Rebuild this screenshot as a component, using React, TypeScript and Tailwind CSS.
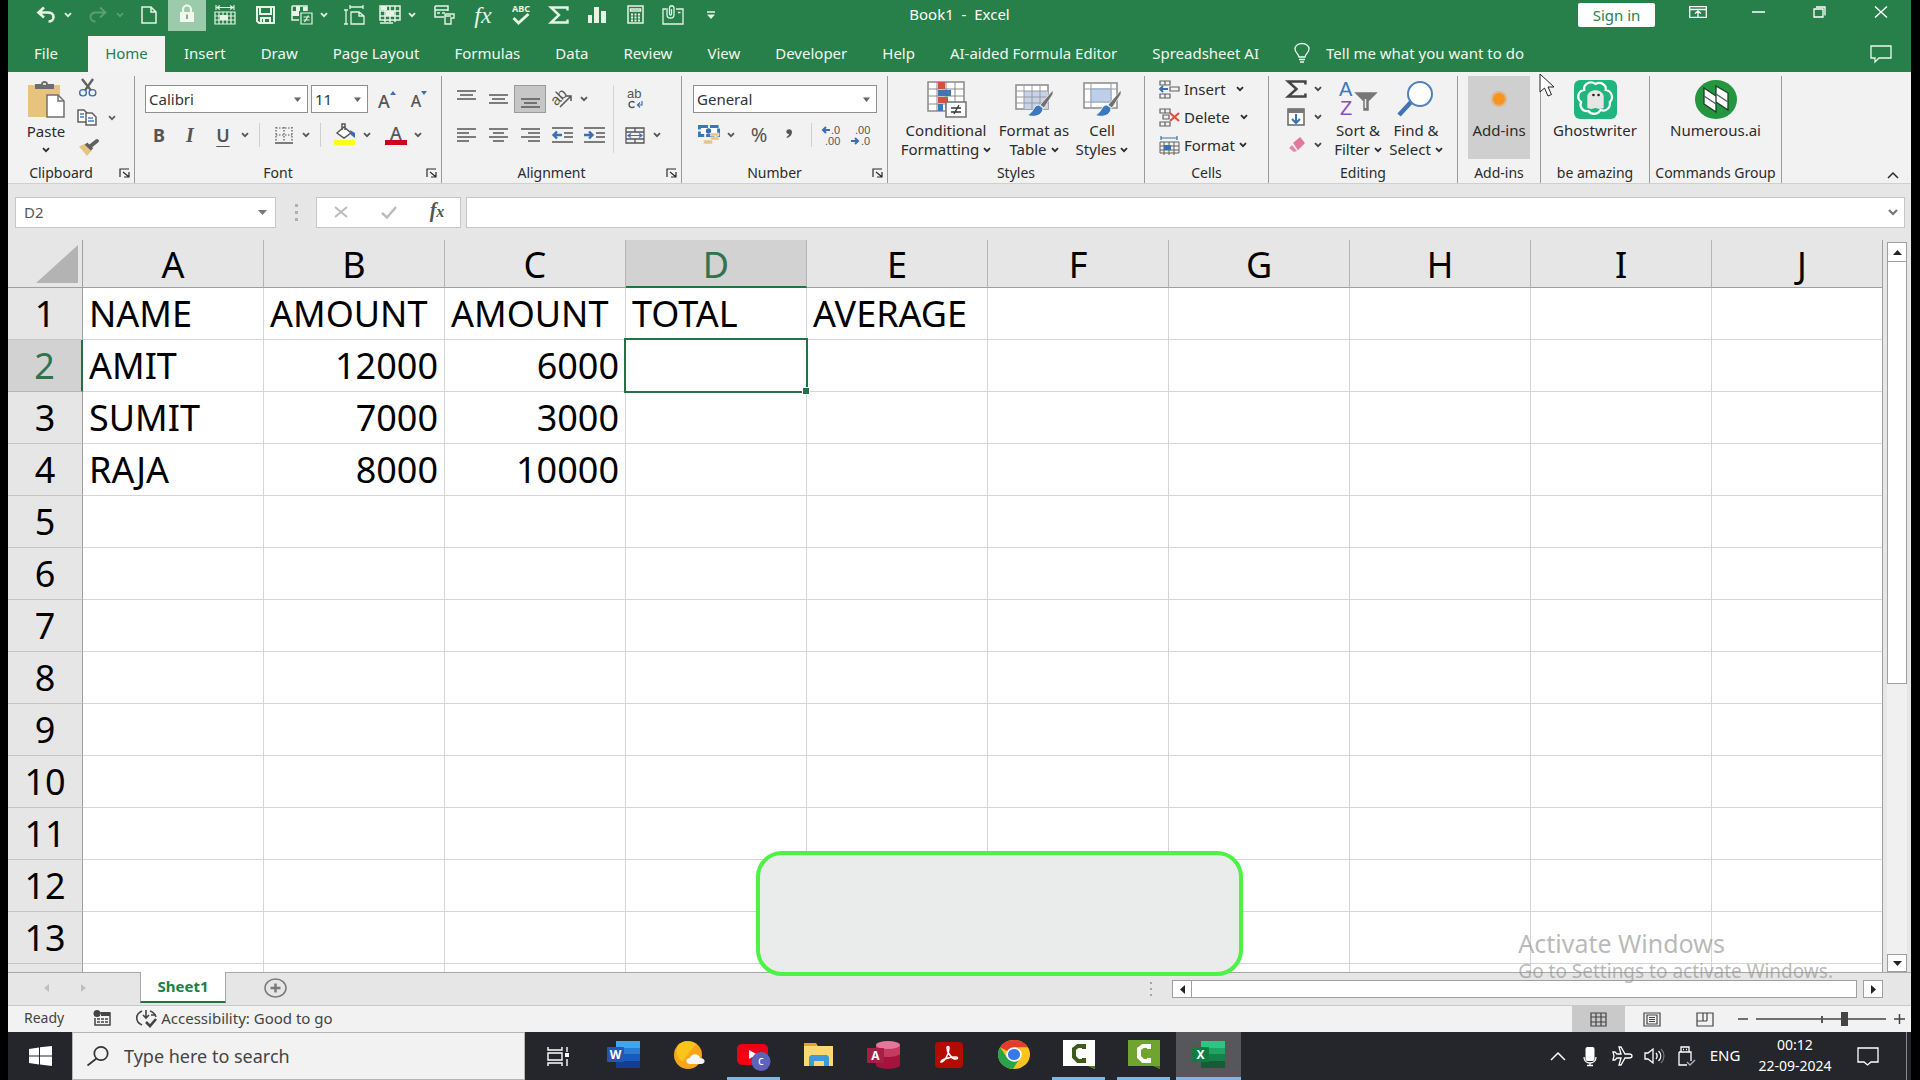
import type { ReactNode } from "react";

type IconProps = {
  w?: number;
  h?: number;
  box?: string;
  className?: string;
  children: ReactNode;
};

const Icon = ({ w = 22, h = 20, box = "0 0 22 20", className = "", children }: IconProps) => (
  <svg
    width={w}
    height={h}
    viewBox={box}
    preserveAspectRatio="none"
    fill="none"
    stroke="currentColor"
    strokeWidth="1.5"
    aria-hidden="true"
    className={`shrink-0 overflow-visible ${className}`}
  >
    {children}
  </svg>
);

const Chevron = ({ className = "" }: { className?: string }) => (
  <Icon w={8} h={6} box="0 0 8 6" className={className}>
    <path d="M1 1.2 4 4.2 7 1.2" strokeWidth="1.8" />
  </Icon>
);

const Triangle = () => (
  <Icon w={7} h={5} box="0 0 7 5">
    <path d="M0 .5h7L3.500 5z" fill="#666" stroke="none" />
  </Icon>
);

type ButtonProps = {
  label: string;
  className?: string;
  children?: ReactNode;
};

const IconButton = ({ label, className = "w-8", children }: ButtonProps) => (
  <button aria-label={label} className={`flex shrink-0 items-center justify-center ${className}`}>
    {children}
  </button>
);

const SplitButton = ({ label, className = "w-[52px]", children }: ButtonProps) => (
  <button aria-label={label} className={`flex shrink-0 items-center ${className}`}>
    <span className="flex w-8 justify-center">{children}</span>
    <Chevron className="ml-[2px]" />
  </button>
);

const Sigma = ({ w = 20, h = 18 }: { w?: number; h?: number }) => (
  <Icon w={w} h={h} box="0 0 20 18">
    <path d="M18.500 4.500V1.500H2L10 9l-8 7.500h16.500v-3" strokeWidth="2.400" />
  </Icon>
);

const QuickAccess = () => (
  <div className="flex h-[31px] flex-1 items-stretch pb-[2px] text-[#e8f3e6]">
    <span className="w-[22px]" />
    <SplitButton label="Undo">
      <Icon w={20} h={17} box="0 0 20 17">
        <path d="M8 1.500 2.500 6.500 8 11.500M3 6.500h8.500c4 0 6 2 6 4.500s-2 4.500-5 4.500" strokeWidth="2.600" />
      </Icon>
    </SplitButton>
    <SplitButton label="Redo" className="w-12 text-[#5a9f6d]">
      <Icon w={20} h={17} box="0 0 20 17">
        <path d="M12 1.500 17.500 6.500 12 11.500M17 6.500H8.500c-4 0-6 2-6 4.500s2 4.500 5 4.500" strokeWidth="2" />
      </Icon>
    </SplitButton>
    <IconButton label="New" className="w-[38px]">
      <Icon w={16} h={18} box="0 0 16 18">
        <path d="M1 1h9l5 5v11H1zM10 1v5h5" />
      </Icon>
    </IconButton>
    <IconButton label="Lock Cell" className="-mb-[2px] w-[38px] bg-[#9bcbaa] pb-1">
      <Icon w={16} h={19} box="0 0 16 19">
        <path d="M4 9V5.500a4 4 0 0 1 8 0V9" stroke="#f3f8ef" strokeWidth="2.200" />
        <path d="M1 8h14v10H1z" fill="#f3f8ef" stroke="none" />
        <path d="M8 10.500v4.500" stroke="#7fb08c" strokeWidth="2" />
      </Icon>
    </IconButton>
    <IconButton label="Form" className="w-[38px]">
      <Icon>
        <path d="M2 0v5M20 0v5M3 2.500h16M6 .5 3 2.500l3 2M16 .5l3 2-3 2" strokeWidth="1.100" />
        <path d="M1 7h20v12H1zM1 11h20M1 15h20M5 7v12M9 7v12M13 7v12M17 7v12" strokeWidth="1.200" />
        <path d="M6 10h8v5H6z" fill="currentColor" stroke="none" />
      </Icon>
    </IconButton>
    <IconButton label="Save" className="w-[42px]">
      <Icon w={19} h={18} box="0 0 19 18">
        <path d="M1 1h17v16H3l-2-2zM4 1v7h11V1M5 17v-5h9v5M8 13v4" strokeWidth="2" />
      </Icon>
    </IconButton>
    <SplitButton label="Conditional Formatting" className="w-[50px]">
      <Icon>
        <path d="M1 1h15v5M1 1v14h7" />
        <path d="M5 1h4v5H5zM5 6h3v5H5zM1 6h4v5H1zM12 2h4v4h-4z" fill="currentColor" stroke="none" />
        <path d="M10 8h11v11H10zM12.500 12h6M12.500 15h6M17.500 10.500l-4 6.500" strokeWidth="1.200" />
      </Icon>
    </SplitButton>
    <IconButton label="Page Size" className="w-[38px]">
      <Icon>
        <path d="M2 5v14M0 5h4M0 19h4M6 2h13M6 0v4M19 0v4M7 7h8l5 4v8H7zM15 7v4h5" strokeWidth="1.300" />
      </Icon>
    </IconButton>
    <SplitButton label="Format Cells">
      <Icon>
        <path d="M1 1h20v14H1zM1 6h20M1 11h20M6 1v16M11 1v16M16 1v16M1 18h13" />
        <path d="M2 1h6v4H2zM7 6h8v5H7z" fill="currentColor" stroke="none" />
      </Icon>
    </SplitButton>
    <IconButton label="Page Setup" className="w-[38px]">
      <Icon>
        <path d="M1 1h13v5M1 1v11h9M1 5h13M3 8h3M8 8h3" />
        <path d="M12 9h8v4h-3v6h-6v-8M12 9c-1.500 0-1.500 2 0 2h5" strokeWidth="1.400" />
      </Icon>
    </IconButton>
    <IconButton label="Insert Function" className="w-[38px] font-['Liberation_Serif',serif] text-2xl italic">
      fx
    </IconButton>
    <IconButton label="Spelling" className="w-[38px] flex-col">
      <span className="text-[9px] leading-[8px] font-bold">ABC</span>
      <Icon w={18} h={12} box="0 0 18 12">
        <path d="m1.500 5 5 5L16.500 1" strokeWidth="2.800" />
      </Icon>
    </IconButton>
    <IconButton label="Sum" className="w-[38px]">
      <Sigma />
    </IconButton>
    <IconButton label="Column Chart" className="w-[38px]">
      <Icon w={20} h={16} box="0 0 20 16">
        <path d="M1 8h4v8H1zM7 0h5v16H7zM14 4h5v12h-5z" fill="currentColor" stroke="none" />
      </Icon>
    </IconButton>
    <IconButton label="Calculator" className="w-[38px]">
      <Icon w={17} h={19} box="0 0 17 19">
        <path d="M1 1h15v17H1zM3.500 4h10v2h-10z" />
        <path d="M4 9.500h9M4 12.500h9M4 15.500h9" strokeDasharray="2 1.500" strokeWidth="2" />
      </Icon>
    </IconButton>
    <IconButton label="Attach" className="w-[38px]">
      <Icon>
        <path d="M4 4H1v15h20V4h-7M5 3v7c0 4 7 4 7 0V3c0-3-4.500-3-4.500 0v6c0 1.500 2 1.500 2 0V4M16 7.500h2.500" strokeWidth="1.300" />
      </Icon>
    </IconButton>
    <IconButton label="Customize Quick Access Toolbar" className="w-[38px]">
      <Icon w={8} h={8} box="0 0 8 8">
        <path d="M0 1h8" />
        <path d="M0 3.500h8L4 8z" fill="currentColor" stroke="none" />
      </Icon>
    </IconButton>
  </div>
);

const TitleBar = () => (
  <div className="flex h-9 items-start justify-between text-white">
    <QuickAccess />
    <h1 className="pt-1 text-[15px] leading-5 whitespace-pre">Book1  -  Excel</h1>
    <div className="flex flex-1 items-start justify-end">
      <button className="mt-[3px] mr-3 h-6 w-[77px] rounded-xs bg-white text-[15px] leading-5 text-[#277f49]">
        Sign in
      </button>
      <IconButton label="Ribbon Display Options" className="h-6 w-[61px]">
        <Icon w={18} h={12} box="0 0 18 12">
          <path d="M.7.7h16.600v10.600H.7zM.7 3.500h16.600M9 11V5M6 7.500l3-2.500 3 2.500" strokeWidth="1.300" />
        </Icon>
      </IconButton>
      <IconButton label="Minimize" className="h-6 w-[61px]">
        <Icon w={13} h={2} box="0 0 13 2">
          <path d="M0 1h13" />
        </Icon>
      </IconButton>
      <IconButton label="Restore" className="h-6 w-[61px]">
        <Icon w={13} h={12} box="0 0 13 12">
          <path d="M1 3h9v8H1zM3 1h9v8.500" strokeWidth="1.300" />
        </Icon>
      </IconButton>
      <IconButton label="Close" className="h-6 w-[61px]">
        <Icon w={14} h={12} box="0 0 14 12">
          <path d="m1 .5 12 11M13 .5 1 11.500" strokeWidth="1.400" />
        </Icon>
      </IconButton>
    </div>
  </div>
);

const tabs = [
  "Insert",
  "Draw",
  "Page Layout",
  "Formulas",
  "Data",
  "Review",
  "View",
  "Developer",
  "Help",
  "AI-aided Formula Editor",
  "Spreadsheet AI",
];

const TabBar = () => (
  <nav className="flex h-9 items-stretch text-[15px] text-[#f1f8ee]">
    <button className="w-20 pr-1 pb-[2px]">File</button>
    <button className="mr-[2px] w-[77px] bg-[#f3f3f3] pb-[2px] text-[#277f49]">Home</button>
    <div className="flex gap-px">
      {tabs.map((tab) => (
        <button key={tab} className="px-[17px] pb-[2px] whitespace-nowrap">
          {tab}
        </button>
      ))}
    </div>
    <label className="ml-[18px] flex items-center gap-4 pb-[2px]">
      <Icon w={16} h={20} box="0 0 16 20">
        <path d="M5 14c0-3-4-4-4-8a7 5.500 0 0 1 14 0c0 4-4 5-4 8zM5 16.500h6M6 19h4" strokeWidth="1.300" />
      </Icon>
      <input
        aria-label="Tell me what you want to do"
        placeholder="Tell me what you want to do"
        className="w-56 bg-transparent outline-none placeholder:text-[#f1f8ee]"
      />
    </label>
    <IconButton label="Comments" className="mr-[19px] ml-auto">
      <Icon w={22} h={18} box="0 0 22 18">
        <path d="M1 1h20v12H9l-4 4v-4H1z" strokeWidth="1.300" />
      </Icon>
    </IconButton>
  </nav>
);

type GroupProps = {
  title: string;
  className: string;
  launcher?: boolean;
  children: ReactNode;
};

const Group = ({ title, className, launcher, children }: GroupProps) => (
  <section className={`flex shrink-0 flex-col border-r border-[#9a9a9a] ${className}`}>
    <div className="flex h-[87px] justify-center">{children}</div>
    <div className="flex h-5 items-center text-sm">
      <h2 className="flex-1 text-center whitespace-nowrap">{title}</h2>
      {launcher && (
        <IconButton label={`${title} settings`} className="w-5">
          <Icon w={11} h={10} box="0 0 11 10">
            <path d="M1 9V1h9M4 4l5.500 4.500M10 4v5H5" strokeWidth="1.200" />
          </Icon>
        </IconButton>
      )}
    </div>
  </section>
);

type ComboProps = {
  label: string;
  value: string;
  className: string;
};

const Combo = ({ label, value, className }: ComboProps) => (
  <label className={`flex h-7 items-center border border-[#8f8f8f] bg-white pr-[6px] ${className}`}>
    <select aria-label={label} className="min-w-0 flex-1 appearance-none bg-transparent pl-[3px] text-[15px] outline-none">
      <option>{value}</option>
    </select>
    <Triangle />
  </label>
);

const Divider = () => <span className="mx-2 h-6 w-px shrink-0 bg-[#cfcfcf]" />;

const lineShapes = {
  top: "M0 1h19M3 5h13M0 9h19",
  middle: "M0 5h19M3 9h13M0 13h19",
  bottom: "M0 9h19M3 13h13M0 17h19",
  left: "M0 3h19M0 7h12M0 11h19M0 15h12",
  center: "M0 3h19M4 7h11M0 11h19M4 15h11",
  right: "M0 3h19M7 7h12M0 11h19M7 15h12",
};

const Lines = ({ kind }: { kind: keyof typeof lineShapes }) => (
  <Icon w={19} h={18} box="0 0 19 18">
    <path d={lineShapes[kind]} strokeWidth="1.300" />
  </Icon>
);

type BigProps = {
  lines: string[];
  className: string;
  menu?: boolean;
  children: ReactNode;
};

const BigButton = ({ lines, className, menu, children }: BigProps) => (
  <button className={`flex shrink-0 flex-col items-center pt-[3px] text-[15px] leading-[19px] ${className}`}>
    <span className="flex h-[42px] items-center pb-[2px]">{children}</span>
    {lines.map((line, i) => (
      <span key={line} className="flex items-center gap-1 whitespace-nowrap">
        {line}
        {menu && i === lines.length - 1 && <Chevron />}
      </span>
    ))}
  </button>
);

const ClipboardGroup = () => (
  <Group title="Clipboard" className="w-[127px]" launcher>
    <div className="flex flex-1 pl-[14px]">
      <button className="flex w-12 flex-col items-center pt-[5px] text-[15px] leading-5">
        <Icon w={38} h={37} box="0 0 38 37" className="mb-[3px]">
          <path d="M1 4h32v32H1z" fill="#e8c37d" stroke="none" />
          <path d="M8 8V3h6c0-4 7-4 7 0h6v5z" fill="#6d6d6d" stroke="none" />
          <path d="M16 3h3" stroke="#fff" />
          <path d="M20 14h11l6 6v16H20z" fill="#fff" stroke="#707070" />
          <path d="M31 14v6h6" stroke="#707070" />
        </Icon>
        Paste
        <Chevron className="mt-[6px]" />
      </button>
      <div className="flex flex-col justify-between pb-1 text-[#606060]">
        <IconButton label="Cut" className="h-6 w-[52px] pr-4">
          <Icon w={20} h={18} box="0 0 20 19">
            <path d="m4 0 9 12M15 0 7 12" strokeWidth="2.400" />
            <circle cx="5" cy="14.500" r="3.300" stroke="#3b6eb4" />
            <circle cx="14.500" cy="14.500" r="3.300" stroke="#3b6eb4" />
          </Icon>
        </IconButton>
        <button aria-label="Copy" className="flex h-6 w-[52px] items-center justify-between pr-[6px] pl-[7px]">
          <Icon w={20} h={17} box="0 0 20 17">
            <path d="M1 1h6l3 3v9H1z" fill="#fff" />
            <path d="M9 4h6l4 4v8H9z" fill="#fff" />
            <path d="M3 5h4M3 8h4M11 9h5M11 12h6" stroke="#4a7fc0" />
          </Icon>
          <Chevron />
        </button>
        <IconButton label="Format Painter" className="h-6 w-[52px] pr-4">
          <Icon w={21} h={16} box="0 0 21 17">
            <path d="m1 8 6-3 7 7-5 6z" fill="#e8c37d" stroke="none" />
            <path d="m8 5 6 6" strokeWidth="3.500" />
            <path d="m12 8 7-6" strokeWidth="4" strokeLinecap="round" />
          </Icon>
        </IconButton>
      </div>
    </div>
  </Group>
);

const FontGroup = () => (
  <Group title="Font" className="w-[307px]" launcher>
    <div className="flex flex-1 flex-col gap-2 pt-[9px] pl-[10px] text-[#555]">
      <div className="flex items-center">
        <Combo label="Font" value="Calibri" className="mr-[3px] w-[163px] text-[#333]" />
        <Combo label="Font Size" value="11" className="mr-[3px] w-[57px] text-[#333]" />
        <IconButton label="Increase Font Size" className="w-8 pt-1 text-lg leading-6 font-medium">
          A
          <Icon w={6} h={4} box="0 0 6 4" className="mb-4">
            <path d="M0 4h6L3 0z" fill="#3b6eb4" stroke="none" />
          </Icon>
        </IconButton>
        <IconButton label="Decrease Font Size" className="w-8 pt-1 text-base leading-6 font-medium">
          A
          <Icon w={6} h={4} box="0 0 6 4" className="mb-4">
            <path d="M0 0h6L3 4z" fill="#3b6eb4" stroke="none" />
          </Icon>
        </IconButton>
      </div>
      <div className="flex h-7 items-center text-lg">
        <IconButton label="Bold" className="w-7 font-bold">B</IconButton>
        <IconButton label="Italic" className="w-[34px] font-['Liberation_Serif',serif] text-xl font-bold italic">
          I
        </IconButton>
        <SplitButton label="Underline" className="w-11 font-semibold">
          <span className="underline underline-offset-4">U</span>
        </SplitButton>
        <Divider />
        <SplitButton label="Borders" className="w-11">
          <Icon w={18} h={17} box="0 0 18 17">
            <path d="M1 0v15M9 0v15M17 0v15M1 1h16M1 8h16" strokeDasharray="1.500 1.500" strokeWidth="1.200" />
            <path d="M0 16h18" />
          </Icon>
        </SplitButton>
        <Divider />
        <SplitButton label="Fill Color" className="w-[51px]">
          <Icon w={22} h={20} box="0 0 22 20">
            <path d="m3 8 7-6 7 6-7 5zM8 5V-1h3v6" fill="#fff" />
            <path d="m16 5 5 3v5l-4-3z" fill="#3b6eb4" stroke="none" />
            <path d="M0 15h21v5H0z" fill="#ffff1f" stroke="none" />
          </Icon>
        </SplitButton>
        <SplitButton label="Font Color" className="w-[50px] text-lg leading-[14px] font-medium">
          <span className="w-[22px] border-b-[5px] border-[#d0021b] text-center">A</span>
        </SplitButton>
      </div>
    </div>
  </Group>
);

const AlignmentGroup = () => (
  <Group title="Alignment" className="w-60" launcher>
    <div className="flex flex-1 items-start pt-[9px] pl-2 text-[#555]">
      <div className="flex flex-col gap-2">
        <div className="flex h-7">
          <IconButton label="Top Align"><Lines kind="top" /></IconButton>
          <IconButton label="Middle Align"><Lines kind="middle" /></IconButton>
          <IconButton label="Bottom Align" className="w-8 border border-[#9a9a9a] bg-[#c6c6c6]">
            <Lines kind="bottom" />
          </IconButton>
          <SplitButton label="Orientation" className="w-16">
            <Icon w={22} h={20} box="0 0 22 20" className="font-['Liberation_Sans',sans-serif]">
              <text x="0" y="13" fontSize="15" fill="currentColor" stroke="none" transform="rotate(-45 8 9)">ab</text>
              <path d="M9 18 20 7M15 7h5v5" />
            </Icon>
          </SplitButton>
        </div>
        <div className="flex h-7">
          <IconButton label="Align Left"><Lines kind="left" /></IconButton>
          <IconButton label="Center"><Lines kind="center" /></IconButton>
          <IconButton label="Align Right"><Lines kind="right" /></IconButton>
          <IconButton label="Decrease Indent">
            <Icon w={21} h={16} box="0 0 21 16">
              <path d="M0 1h21M12 6h9M12 10h9M0 15h21" strokeWidth="1.300" />
              <path d="M10 8H2M5 4.500 1.500 8 5 11.500" stroke="#3b6eb4" strokeWidth="2.400" />
            </Icon>
          </IconButton>
          <IconButton label="Increase Indent">
            <Icon w={21} h={16} box="0 0 21 16">
              <path d="M0 1h21M12 6h9M12 10h9M0 15h21" strokeWidth="1.300" />
              <path d="M0 8h8M5 4.500 8.500 8 5 11.500" stroke="#3b6eb4" strokeWidth="2.400" />
            </Icon>
          </IconButton>
        </div>
      </div>
      <span className="mx-[3px] h-[68px] w-px bg-[#d5d5d5]" />
      <div className="flex flex-col gap-2">
        <IconButton label="Wrap Text" className="h-7 w-9">
          <Icon w={16} h={20} box="0 0 16 20" className="font-['Liberation_Sans',sans-serif]">
            <text x="0" y="9" fontSize="13" fill="currentColor" stroke="none">ab</text>
            <path d="M7.500 13.500c-2-2-5.500-1-5.500 2s3.500 4 5.500 2" />
            <path d="M15 12v4h-4M13 13.500 10.500 16l2.500 2.500" stroke="#3b6eb4" strokeWidth="1.200" />
          </Icon>
        </IconButton>
        <SplitButton label="Merge and Center" className="h-7 w-[52px] pl-[2px]">
          <Icon w={20} h={17} box="0 0 20 17">
            <path d="M1 1h18v15H1zM1 5h18M1 12h18M10 1v4M10 12v4" strokeWidth="1.300" />
            <path d="M3 8.500h14M6 6.500l-3 2 3 2M14 6.500l3 2-3 2" stroke="#3b6eb4" strokeWidth="1.200" />
          </Icon>
        </SplitButton>
      </div>
    </div>
  </Group>
);

const NumberGroup = () => (
  <Group title="Number" className="w-[206px]" launcher>
    <div className="flex flex-1 flex-col gap-2 pt-[9px] pl-[11px] text-[#555]">
      <Combo label="Number Format" value="General" className="w-[184px] text-[#333]" />
      <div className="flex h-7 items-center">
        <SplitButton label="Accounting Number Format" className="w-[50px]">
          <Icon w={22} h={20} box="0 0 23 20">
            <path d="M1.500 1.500h20v9h-20z" fill="#fff" stroke="#3b76b8" strokeWidth="3" strokeDasharray="9 2" />
            <circle cx="11" cy="6" r="2.800" fill="#3b6eb4" stroke="none" />
            <path d="M13 8h9v3h-9zM13 12h9v3h-9zM6 15h9v4H6z" fill="#e8c37d" stroke="#f1f1f1" strokeWidth=".6" />
          </Icon>
        </SplitButton>
        <IconButton label="Percent Style" className="w-8 text-xl">%</IconButton>
        <IconButton label="Comma Style" className="w-7">
          <Icon w={7} h={9} box="0 0 7 9" className="mb-1">
            <path d="M1 1C3-.5 6 .5 6 3c0 3-2 5-5 6l-.500-1C2 7 3 6 3 5 0 5 0 2 1 1z" fill="currentColor" stroke="none" />
          </Icon>
        </IconButton>
        <Divider />
        <IconButton label="Increase Decimal" className="w-[22px]">
          <Icon w={20} h={19} box="0 0 20 19" className="font-['Liberation_Sans',sans-serif]">
            <path d="M9 4H2M5 1 2 4l3 3" stroke="#3b6eb4" strokeWidth="2" />
            <text x="10" y="8" fontSize="11" fill="currentColor" stroke="none">.0</text>
            <text x="4" y="19" fontSize="11" fill="currentColor" stroke="none">.00</text>
          </Icon>
        </IconButton>
        <IconButton label="Decrease Decimal" className="ml-2 w-[22px]">
          <Icon w={20} h={19} box="0 0 20 19" className="font-['Liberation_Sans',sans-serif]">
            <path d="M0 15h7M4 12l3 3-3 3" stroke="#3b6eb4" strokeWidth="2" />
            <text x="4" y="8" fontSize="11" fill="currentColor" stroke="none">.00</text>
            <text x="10" y="19" fontSize="11" fill="currentColor" stroke="none">.0</text>
          </Icon>
        </IconButton>
      </div>
    </div>
  </Group>
);

const Brush = () => (
  <>
    <path d="m38 9-13 15 4 3 9-14z" fill="#707070" stroke="#f3f3f3" strokeWidth=".8" />
    <path d="M24 24c-6 0-5 8-12 10 6 3 16 1 16-7z" fill="#3b78c0" stroke="#fff" strokeWidth=".8" />
  </>
);

const StylesGroup = () => (
  <Group title="Styles" className="w-[257px]">
    <div className="flex pr-1">
      <BigButton lines={["Conditional", "Formatting"]} className="w-24" menu>
        <Icon w={40} h={37} box="0 0 40 37" className="ml-[2px]">
          <path d="M1 1h36v29H1z" fill="#fff" stroke="#8a8a8a" />
          <path d="M1 8h36M1 15h36M1 23h36M10 1v29M19 1v29M28 1v29" stroke="#8a8a8a" strokeWidth="1" />
          <path d="M11 1h7v7h-7zM11 16h10v6H11z" fill="#d0533c" stroke="none" />
          <path d="M11 9h13v6H11zM11 23h5v7h-5z" fill="#3e76b8" stroke="none" />
          <path d="M19 21h20v15H19z" fill="#fff" stroke="#707070" />
          <path d="M24 27h10M24 31h10M32 24l-5 9" stroke="#333" strokeWidth="1.300" />
        </Icon>
      </BigButton>
      <BigButton lines={["Format as", "Table"]} className="w-20" menu>
        <Icon w={40} h={37} box="0 0 40 37" className="ml-[2px]">
          <path d="M1 4h32v24H1z" fill="#fff" stroke="#8a8a8a" />
          <path d="M9 10h24v18H9z" fill="#c7d3ea" stroke="none" />
          <path d="M1 10h32M1 16h32M1 22h32M9 4v24M17 4v24M25 4v24" stroke="#9a9a9a" strokeWidth="1" />
          <Brush />
        </Icon>
      </BigButton>
      <BigButton lines={["Cell", "Styles"]} className="w-14" menu>
        <Icon w={40} h={37} box="0 0 40 37" className="ml-[2px]">
          <path d="M1 2h33v25H1z" fill="#fff" stroke="#8a8a8a" />
          <path d="M1 8h33M1 21h33M8 2v25M28 2v25" stroke="#9a9a9a" strokeWidth="1" />
          <path d="M8 8h20v13H8z" fill="#c0cfe8" stroke="#8ea6cc" strokeWidth="1" />
          <Brush />
        </Icon>
      </BigButton>
    </div>
  </Group>
);

const CellsGroup = () => (
  <Group title="Cells" className="w-[124px]">
    <div className="flex flex-1 flex-col gap-1 pt-px pl-[14px] text-[15px] leading-6">
      <button className="flex items-center gap-1">
        <Icon w={21} h={19} box="0 0 21 19" className="text-[#606060]">
          <path d="M1 1h10v4H1zM6 1v4M1 14h10v4H1zM6 14v4M11 7h9v4h-9z" strokeWidth="1.200" />
          <path d="M9 9H1M4 6 1 9l3 3" stroke="#3b6eb4" strokeWidth="1.800" />
        </Icon>
        Insert
        <Chevron className="ml-[6px]" />
      </button>
      <button className="flex items-center gap-1">
        <Icon w={21} h={19} box="0 0 21 19" className="text-[#606060]">
          <path d="M1 1h10v4H1zM6 1v4M1 14h10v4H1zM6 14v4M4 7h6v4H4z" strokeWidth="1.200" />
          <path d="m11 5 9 8M20 5l-9 8" stroke="#e0523f" strokeWidth="2.200" />
        </Icon>
        Delete
        <Chevron className="ml-[6px]" />
      </button>
      <button className="flex items-center gap-1">
        <Icon w={21} h={19} box="0 0 21 19" className="text-[#606060]">
          <path d="M2 0v4M18 0v4M2 2h16" stroke="#3b6eb4" strokeWidth="1.200" />
          <path d="M1 6h19v11H1zM1 10h19M1 14h19M5 6v13M10 6v13M15 6v13" strokeWidth="1" />
          <path d="M5 9h7v5H5z" fill="#3b6eb4" stroke="none" />
        </Icon>
        Format
        <Chevron />
      </button>
    </div>
  </Group>
);

const EditingGroup = () => (
  <Group title="Editing" className="w-[189px]">
    <div className="flex flex-col text-[#444]">
      <SplitButton label="AutoSum" className="h-7 w-[50px] pb-[2px]">
        <Sigma w={21} h={18} />
      </SplitButton>
      <SplitButton label="Fill" className="h-7 w-[50px] pb-[2px]">
        <Icon w={18} h={18} box="0 0 18 18">
          <path d="M1 1h16v16H1z" fill="#fff" stroke="#666" />
          <path d="M1 1h16v4H1z" fill="#777" stroke="none" />
          <path d="M9 6v9M5 11l4 4 4-4" stroke="#3b6eb4" strokeWidth="2" />
        </Icon>
      </SplitButton>
      <SplitButton label="Clear" className="h-7 w-[50px] pb-[2px]">
        <Icon w={17} h={16} box="0 0 17 16">
          <path d="m6 6 6-5 4 5-6 6z" fill="#e07a97" stroke="#e07a97" />
          <path d="m4 8 5 6-3 1-5-4z" fill="#e58aa4" stroke="none" />
        </Icon>
      </SplitButton>
    </div>
    <BigButton lines={["Sort &", "Filter"]} className="w-14" menu>
      <Icon w={38} h={36} box="0 0 38 36" className="font-['Liberation_Sans',sans-serif]">
        <text x="0" y="15" fontSize="20" fill="#3b78c0" stroke="none">A</text>
        <text x="1" y="34" fontSize="20" fill="#8a4fb5" stroke="none">Z</text>
        <path d="M17 12h20l-8 8v9h-4v-9z" fill="#777" stroke="#777" />
        <path d="M26.500 18v9" stroke="#eee" />
      </Icon>
    </BigButton>
    <BigButton lines={["Find &", "Select"]} className="w-[60px]" menu>
      <Icon w={38} h={36} box="0 0 38 36">
        <path d="M15 20 2 34" stroke="#3f74b5" strokeWidth="4.500" />
        <circle cx="23" cy="13" r="12" fill="#fff" stroke="#4d82bf" strokeWidth="2" />
      </Icon>
    </BigButton>
  </Group>
);

const Ribbon = () => (
  <div className="flex h-28 shrink-0 items-start overflow-hidden border-b border-[#d0d0d0] bg-[#f2f2f2] pt-1 text-[#2b2b2b]">
    <ClipboardGroup />
    <FontGroup />
    <AlignmentGroup />
    <NumberGroup />
    <StylesGroup />
    <CellsGroup />
    <EditingGroup />
    <Group title="Add-ins" className="w-[83px]">
      <BigButton lines={["Add-ins"]} className="h-[83px] w-[62px] bg-[#cfcfcf]">
        <span className="size-3 rounded-full bg-[#f7941d] ring-2 ring-[#f7941d]/40" />
      </BigButton>
    </Group>
    <Group title="be amazing" className="w-[109px]">
      <BigButton lines={["Ghostwriter"]} className="w-24">
        <Icon w={43} h={39} box="0 0 42 39">
          <rect width="42" height="39" rx="6" fill="#1fb57e" stroke="none" />
          <path
            d="M21 4c5-3 11 1 10 6 6 1 8 8 4 12 1 6-4 10-9 8-3 5-9 5-12 1-6 1-9-5-7-9-5-4-3-11 3-12-1-6 6-10 11-6z"
            stroke="#fff"
            strokeWidth="2.200"
          />
          <path d="M13 28V17c0-9 16-9 16 0v11l-4 1-4-1-4 1z" fill="#e6e6e6" stroke="none" />
          <circle cx="19" cy="15" r="1.300" fill="#222" stroke="none" />
          <circle cx="24" cy="15" r="1.300" fill="#222" stroke="none" />
        </Icon>
      </BigButton>
    </Group>
    <Group title="Commands Group" className="w-[132px]">
      <BigButton lines={["Numerous.ai"]} className="w-24">
        <Icon w={42} h={39} box="0 0 42 39">
          <ellipse cx="21" cy="19.500" rx="21" ry="19.500" fill="#23963f" stroke="none" />
          <path d="m9 8 12 8v16L9 24zM21 6l12 7v17l-12-8z" fill="#fff" stroke="#173f22" strokeWidth="1.300" />
          <path d="m9 16 12 8M21 14l12 8" stroke="#56605a" strokeWidth="1.500" />
        </Icon>
      </BigButton>
    </Group>
    <IconButton label="Collapse the Ribbon" className="mr-2 ml-auto w-5 self-end pb-1">
      <Icon w={12} h={7} box="0 0 12 7">
        <path d="m1 6 5-5 5 5" />
      </Icon>
    </IconButton>
  </div>
);

const FormulaBar = () => (
  <div className="flex h-14 shrink-0 items-center pr-[6px] pl-[7px] text-[#555]">
    <label className="flex h-[31px] w-[261px] items-center border border-[#c6c6c6] bg-white px-2">
      <input aria-label="Name Box" defaultValue="D2" className="min-w-0 flex-1 text-[15px] outline-none" />
      <Icon w={9} h={5} box="0 0 9 5">
        <path d="M0 0h9L4.500 5z" fill="#777" stroke="none" />
      </Icon>
    </label>
    <span className="flex w-10 flex-col items-center gap-1">
      <i className="size-[3px] bg-[#b0b0b0]" />
      <i className="size-[3px] bg-[#b0b0b0]" />
      <i className="size-[3px] bg-[#b0b0b0]" />
    </span>
    <div className="flex h-[31px] w-[145px] items-center border border-[#c6c6c6] bg-white">
      <IconButton label="Cancel" className="w-12 text-[#bdbdbd]">
        <Icon w={14} h={12} box="0 0 14 12">
          <path d="m1 1 12 10M13 1 1 11" strokeWidth="2" />
        </Icon>
      </IconButton>
      <IconButton label="Enter" className="w-12 text-[#bdbdbd]">
        <Icon w={16} h={13} box="0 0 16 13">
          <path d="m1 7 5 4.500L15 1" strokeWidth="2.500" />
        </Icon>
      </IconButton>
      <IconButton label="Insert Function" className="w-12 pb-1 font-['Liberation_Serif',serif] text-xl font-bold italic">
        <span>f</span>
        <span className="pt-1 text-base">x</span>
      </IconButton>
    </div>
    <label className="ml-[5px] flex h-[31px] flex-1 items-center border border-[#c6c6c6] bg-white pr-[6px]">
      <input aria-label="Formula" className="min-w-0 flex-1 px-2 text-[15px] outline-none" />
      <Icon w={10} h={7} box="0 0 10 7">
        <path d="m1 1 4 4 4-4" strokeWidth="2.200" stroke="#777" />
      </Icon>
    </label>
  </div>
);

const columns = ["A", "B", "C", "D", "E", "F", "G", "H", "I", "J"];

const cells: (string | number)[][] = [
  ["NAME", "AMOUNT", "AMOUNT", "TOTAL", "AVERAGE"],
  ["AMIT", 12000, 6000],
  ["SUMIT", 7000, 3000],
  ["RAJA", 8000, 10000],
];

const rows = Array.from({ length: 14 }, (_, i) => i + 1);

const Grid = () => (
  <div className="min-w-0 flex-1 overflow-hidden border-r border-[#9f9f9f]">
    <table className="w-[1885px] table-fixed border-separate border-spacing-0 text-4xl leading-none text-black">
      <colgroup>
        <col className="w-[75px]" />
        {columns.map((col) => (
          <col key={col} className="w-[181px]" />
        ))}
      </colgroup>
      <thead>
        <tr className="h-12 bg-[#e6e6e6]">
          <th aria-label="Select all" className="border-r border-b border-[#9f9f9f] p-0">
            <Icon w={42} h={38} box="0 0 42 38" className="mr-1 ml-auto">
              <path d="M42 0v38H0z" fill="#b3b3b3" stroke="none" />
            </Icon>
          </th>
          {columns.map((col) => (
            <th
              key={col}
              className={
                col === "D"
                  ? "border-r border-b-2 border-r-[#b5b5b5] border-b-[#217346] bg-[#d2d2d2] p-0 pt-1 font-normal text-[#2f7350]"
                  : "border-r border-b border-r-[#b5b5b5] border-b-[#9f9f9f] p-0 pt-[3px] font-normal"
              }
            >
              {col}
            </th>
          ))}
        </tr>
      </thead>
      <tbody>
        {rows.map((row) => (
          <tr key={row} className="h-[52px] bg-white">
            <th
              className={
                row === 2
                  ? "border-r-2 border-b border-r-[#217346] border-b-[#b5b5b5] bg-[#d2d2d2] p-0 font-normal text-[#2f7350]"
                  : "border-r border-b border-r-[#9f9f9f] border-b-[#c4c4c4] bg-[#e6e6e6] p-0 font-normal"
              }
            >
              {row === 14 ? "" : row}
            </th>
            {columns.map((col, i) => {
              const value = cells[row - 1]?.[i];
              return (
                <td
                  key={col}
                  className={`relative border-r border-b border-[#d6d6d6] px-[6px] py-0 whitespace-nowrap ${
                    typeof value === "number" ? "text-right" : "text-left"
                  }`}
                >
                  {value}
                  {row === 2 && col === "D" && (
                    <span className="absolute -inset-[2px] z-10 border-2 border-[#217346]">
                      <span className="absolute -right-1 -bottom-1 size-2 border border-white bg-[#217346]" />
                    </span>
                  )}
                </td>
              );
            })}
          </tr>
        ))}
      </tbody>
    </table>
  </div>
);

const arrows = {
  up: "M0 5h8L4 0z",
  down: "M0 0h8L4 5z",
};

const VerticalScroll = () => (
  <div className="flex w-7 shrink-0 flex-col items-center pt-[2px]">
    <IconButton label="Scroll up" className="h-5 w-5 border border-[#9f9f9f] bg-white">
      <Icon w={9} h={5} box="0 0 8 5"><path d={arrows.up} fill="#222" stroke="none" /></Icon>
    </IconButton>
    <div className="flex w-5 flex-1 flex-col bg-[#f0f0f0]">
      <div className="h-[61%] border border-t-0 border-[#9f9f9f] bg-white" />
    </div>
    <IconButton label="Scroll down" className="h-[18px] w-5 border border-[#9f9f9f] bg-white">
      <Icon w={9} h={5} box="0 0 8 5"><path d={arrows.down} fill="#222" stroke="none" /></Icon>
    </IconButton>
  </div>
);

const SheetBar = () => (
  <div className="flex h-[33px] shrink-0 items-start border-t border-[#a8a8a8] text-[#222]">
    <div className="flex h-[30px] w-[132px] items-center gap-8 pl-9 text-[#bfbfbf]">
      <Icon w={5} h={8} box="0 0 5 8"><path d="M5 0v8L0 4z" fill="currentColor" stroke="none" /></Icon>
      <Icon w={5} h={8} box="0 0 5 8"><path d="M0 0v8l5-4z" fill="currentColor" stroke="none" /></Icon>
    </div>
    <button className="-mt-px h-[31px] w-[86px] border-x border-b-2 border-x-[#a8a8a8] border-b-[#217346] bg-white text-[15px] font-bold text-[#217f46]">
      Sheet1
    </button>
    <IconButton label="New sheet" className="ml-[38px] h-[30px] text-[#7a7a7a]">
      <Icon w={23} h={20} box="0 0 23 20">
        <ellipse cx="11.500" cy="10" rx="10.500" ry="9" />
        <path d="M6.500 10h10M11.500 5.500v9" strokeWidth="2.500" />
      </Icon>
    </IconButton>
    <div className="ml-auto flex h-8 w-[733px] items-center">
      <span className="mr-5 flex flex-col gap-1">
        <i className="size-[2px] bg-[#a5a5a5]" />
        <i className="size-[2px] bg-[#a5a5a5]" />
        <i className="size-[2px] bg-[#a5a5a5]" />
      </span>
      <IconButton label="Scroll left" className="h-[18px] w-5 border border-[#9f9f9f] bg-white">
        <Icon w={5} h={9} box="0 0 5 8"><path d="M5 0v8L0 4z" fill="currentColor" stroke="none" /></Icon>
      </IconButton>
      <div className="h-[18px] flex-1 border border-l-0 border-[#9f9f9f] bg-white" />
      <IconButton label="Scroll right" className="ml-[6px] h-[18px] w-5 border border-[#9f9f9f] bg-white">
        <Icon w={5} h={9} box="0 0 5 8"><path d="M0 0v8l5-4z" fill="currentColor" stroke="none" /></Icon>
      </IconButton>
    </div>
    <span className="w-7" />
  </div>
);

const StatusBar = () => (
  <div className="flex h-[27px] shrink-0 items-center border-t border-[#c9c9c9] bg-[#f2f2f2] pl-4 text-[15px] text-[#444]">
    <span className="pb-[2px] text-sm">Ready</span>
    <IconButton label="Record Macro" className="ml-[18px] w-10 pb-[2px]">
      <Icon w={18} h={16} box="0 0 18 16">
        <path d="M7 3h10v12H2V8" />
        <path d="M4 9h11M4 12h11" strokeDasharray="3 1" />
        <path d="M8 2h9v4H8z" fill="currentColor" stroke="none" />
        <circle cx="4" cy="3.500" r="3.500" fill="currentColor" stroke="none" />
      </Icon>
    </IconButton>
    <button className="ml-[14px] flex items-center gap-1 pb-[2px]">
      <Icon w={21} h={17} box="0 0 21 17">
        <path d="M6 1c-7 3-7 11 0 14M10 0v8M7 5l3 3 3-3" strokeWidth="1.600" />
        <path d="M14 1c3 1 5 3 6 6M15 5h5" strokeWidth="1.600" />
        <path d="m10 12 4 4 6-7" strokeWidth="2.600" />
      </Icon>
      Accessibility: Good to go
    </button>
    <div className="ml-auto flex items-center self-stretch">
      <IconButton label="Normal" className="w-[53px] self-stretch bg-[#c9c9c9]">
        <Icon w={17} h={15} box="0 0 17 15"><path d="M1 1h15v13H1zM1 5h15M1 10h15M6 1v13M11 1v13" strokeWidth="1.200" /></Icon>
      </IconButton>
      <IconButton label="Page Layout" className="w-[53px]">
        <Icon w={18} h={15} box="0 0 18 15"><path d="M1 1h16v13H1zM4 3h10v9H4zM6 5.500h6M6 7.500h6M6 9.500h6" strokeWidth="1.200" /></Icon>
      </IconButton>
      <IconButton label="Page Break Preview" className="w-[53px]">
        <Icon w={18} h={15} box="0 0 18 15"><path d="M1 1h16v13H1zM7 1v8M11 1v8M1 9h10" strokeWidth="1.200" /></Icon>
      </IconButton>
      <IconButton label="Zoom out" className="w-6">
        <Icon w={10} h={2} box="0 0 10 2"><path d="M0 1h10" /></Icon>
      </IconButton>
      <div className="relative mx-px flex h-4 w-[130px] items-center">
        <input
          type="range"
          aria-label="Zoom"
          defaultValue={69}
          className="h-[2px] w-full appearance-none bg-[#6f6f6f] [&::-webkit-slider-thumb]:h-[14px] [&::-webkit-slider-thumb]:w-[7px] [&::-webkit-slider-thumb]:appearance-none [&::-webkit-slider-thumb]:bg-[#444]"
        />
        <span className="absolute left-1/2 h-[7px] w-[2px] bg-[#555]" />
      </div>
      <IconButton label="Zoom in" className="w-6">
        <Icon w={11} h={10} box="0 0 11 10"><path d="M0 5h11M5.500 0v10" /></Icon>
      </IconButton>
    </div>
  </div>
);

type TaskProps = {
  label: string;
  state?: "running" | "active";
  children: ReactNode;
};

const Task = ({ label, state, children }: TaskProps) => (
  <button
    aria-label={label}
    className={`flex w-[65px] flex-col items-center ${state === "active" ? "bg-[#57575b]" : ""}`}
  >
    <span className="flex flex-1 items-center">{children}</span>
    <span
      className={`h-[3px] ${state ? "bg-[#7fb7e3]" : ""} ${state === "active" ? "w-full" : "w-[53px]"}`}
    />
  </button>
);

const OfficeTile = ({ letter, tones, back }: { letter: string; tones: string[]; back: string }) => (
  <Icon w={33} h={27} box="0 0 33 27">
    <path d="M9 0h24v7H9z" fill={tones[0]} stroke="none" />
    <path d="M9 7h24v6H9z" fill={tones[1]} stroke="none" />
    <path d="M9 13h24v7H9z" fill={tones[2]} stroke="none" />
    <path d="M9 20h24v7H9z" fill={tones[3]} stroke="none" />
    <rect y="6" width="17" height="15" rx="1" fill={back} stroke="none" />
    <text x="8.500" y="18" fontSize="12" fontWeight="700" textAnchor="middle" fill="#fff" stroke="none">
      {letter}
    </text>
  </Icon>
);

const Camtasia = ({ back, ink }: { back: string; ink: string }) => (
  <Icon w={32} h={29} box="0 0 32 29">
    <path d="M0 0h32v29l-6-3H0z" fill={back} stroke="none" />
    <path d="M21 9V6h-6l-4 3v8l4 4h6v-3" stroke={ink} strokeWidth="4" />
    <path d="m25 26 7 3v-3z" fill="#4d7a1e" stroke="none" />
  </Icon>
);

const Taskbar = () => (
  <footer className="flex h-12 shrink-0 items-stretch bg-[#25262b] text-white">
    <IconButton label="Start" className="w-16">
      <Icon w={23} h={20} box="0 0 23 20">
        <path d="M0 3 10 1.500V9.500H0zM11 1.300 23 0v9.500H11zM0 10.500h10v8L0 17zM11 10.500h12V20l-12-1.500z" fill="#fff" stroke="none" />
      </Icon>
    </IconButton>
    <label className="flex w-[453px] items-center gap-[15px] border border-[#b5b5b5] bg-[#f2f2f2] pl-[14px] text-[#333]">
      <Icon w={22} h={20} box="0 0 22 20">
        <circle cx="14" cy="7.500" r="6.700" strokeWidth="1.700" />
        <path d="m9.500 12.500-9 7" strokeWidth="1.700" />
      </Icon>
      <input
        aria-label="Search"
        placeholder="Type here to search"
        className="min-w-0 flex-1 bg-transparent text-lg outline-none placeholder:text-[#444]"
      />
    </label>
    <IconButton label="Task View" className="w-[66px]">
      <Icon w={22} h={19} box="0 0 22 19">
        <path d="M1 0v3h14V0M1 19v-3h14v3M1 6h14v7H1zM20 0v5M20 12v7" strokeWidth="1.400" />
        <path d="M18 6h4v4h-4z" fill="#fff" stroke="none" />
      </Icon>
    </IconButton>
    <Task label="Word">
      <OfficeTile letter="W" tones={["#41a5ee", "#2b7cd3", "#185abd", "#103f91"]} back="#2457b0" />
    </Task>
    <Task label="Weather">
      <Icon w={32} h={28} box="0 0 32 28">
        <circle cx="15" cy="14" r="14" fill="#f9a51a" stroke="none" />
        <path d="M5 4a14 14 0 0 1 18-1L9 21A14 14 0 0 1 5 4z" fill="#fcc419" stroke="none" />
        <path d="M17 23c-5 0-5-6 0-6 1-5 9-5 10 0 6 0 6 6 1 6z" fill="#f3f5fb" stroke="none" />
      </Icon>
    </Task>
    <Task label="YouTube" state="running">
      <Icon w={34} h={28} box="0 0 34 28" className="mt-1">
        <rect y="1" width="31" height="21" rx="5" fill="#f00014" stroke="none" />
        <path d="m12 7 8 4.500-8 4.500z" fill="#fff" stroke="none" />
        <circle cx="24" cy="18.500" r="9.500" fill="#5c63b8" stroke="none" />
        <text x="24" y="22" fontSize="12" textAnchor="middle" fill="#fff" stroke="none">c</text>
      </Icon>
    </Task>
    <Task label="File Explorer">
      <Icon w={29} h={23} box="0 0 29 23">
        <path d="M0 0h12l2 3H0z" fill="#e8a51c" stroke="none" />
        <path d="M0 3h29v20H0z" fill="#fbd872" stroke="none" />
        <path d="M5 23v-9l2-2h16l2 2v9h-5v-5H10v5z" fill="#3d9bdc" stroke="none" />
      </Icon>
    </Task>
    <Task label="Access">
      <Icon w={33} h={28} box="0 0 33 28">
        <path d="M9 4h24v20c0 5-24 5-24 0z" fill="#a4133c" stroke="none" />
        <path d="M9 4h24v9c-4 4-20 4-24 0z" fill="#c73a5f" stroke="none" />
        <ellipse cx="21" cy="4" rx="12" ry="4" fill="#e4779a" stroke="none" />
        <rect y="7" width="17" height="15" rx="1" fill="#a51e44" stroke="none" />
        <text x="8.500" y="19" fontSize="12" fontWeight="700" textAnchor="middle" fill="#fff" stroke="none">A</text>
      </Icon>
    </Task>
    <Task label="Acrobat Reader">
      <Icon w={28} h={26} box="0 0 28 26">
        <rect width="28" height="26" rx="4" fill="#b30b00" stroke="none" />
        <path d="M6 20c3 0 8-7 8-14 0-2-2-2-2 0 0 5 5 11 9 11 2 0 2-2 0-2-5 0-15 2-15 5z" stroke="#fff" strokeWidth="1.600" />
      </Icon>
    </Task>
    <Task label="Chrome">
      <Icon w={32} h={29} box="0 0 32 32">
        <circle cx="16" cy="16" r="16" fill="#fcc31e" stroke="none" />
        <path d="M16 16 2.100 8A16 16 0 0 1 29.900 8H16z" fill="#e33b2e" stroke="none" />
        <path d="M2.100 8A16 16 0 0 0 15 32l7-12-12.900-.5z" fill="#2ba24c" stroke="none" />
        <circle cx="16" cy="16" r="7" fill="#3b78e7" stroke="#fff" strokeWidth="1.800" />
      </Icon>
    </Task>
    <Task label="Camtasia" state="running">
      <Camtasia back="#fff" ink="#3c5a1c" />
    </Task>
    <Task label="Camtasia Recorder" state="running">
      <Camtasia back="#6fa52f" ink="#fff" />
    </Task>
    <Task label="Excel" state="active">
      <OfficeTile letter="X" tones={["#2fc481", "#21a366", "#158048", "#185c37"]} back="#107c41" />
    </Task>
    <div className="ml-auto flex items-stretch">
      <IconButton label="Show hidden icons">
        <Icon w={16} h={9} box="0 0 16 9"><path d="m1 8 7-7 7 7" /></Icon>
      </IconButton>
      <IconButton label="Microphone">
        <Icon w={14} h={19} box="0 0 14 19">
          <rect x="2.500" width="9" height="14" rx="2" fill="#fff" stroke="none" />
          <path d="M1 10c0 8 12 8 12 0M7 16v3M4 18.500h6" strokeWidth="1.300" />
        </Icon>
      </IconButton>
      <IconButton label="Airplane mode">
        <Icon w={21} h={20} box="0 0 21 20">
          <path d="M20 10c0-1.500-2-2-3-2h-4L9 1H7l2 7H5L3 6H1l1 4-1 4h2l2-2h4l-2 7h2l4-7h4c1 0 3-.5 3-2z" strokeWidth="1.300" />
        </Icon>
      </IconButton>
      <IconButton label="Volume">
        <Icon w={21} h={16} box="0 0 21 16">
          <path d="M1 5h3l5-4v14l-5-4H1zM12 5c1.500 2 1.500 4 0 6M14.500 3c3 3 3 7 0 10" strokeWidth="1.300" />
          <path d="M17 1c4 4 4 10 0 14" strokeWidth="1.200" stroke="#777" />
        </Icon>
      </IconButton>
      <IconButton label="Safely remove hardware">
        <Icon w={17} h={20} box="0 0 17 20">
          <path d="M3 6V1h8v5M1 6h12v9M1 6v13h8M5 3.500h1M8 3.500h1" strokeWidth="1.300" />
          <path d="m9 16 3 3 5-5" stroke="#aaa" />
        </Icon>
      </IconButton>
      <button className="w-[46px] pb-[2px] text-[15px]">ENG</button>
      <button className="w-[94px] pb-[2px] text-sm leading-[21px] whitespace-nowrap">
        <span className="block">00:12</span>
        <span className="block">22-09-2024</span>
      </button>
      <IconButton label="Notifications" className="w-[52px]">
        <Icon w={22} h={19} box="0 0 22 19"><path d="M1 1h20v14h-7l-3.500 3L7 15H1z" strokeWidth="1.300" /></Icon>
      </IconButton>
      <button aria-label="Show desktop" className="ml-3 w-[5px] border-l border-[#8a8a8a]" />
    </div>
  </footer>
);

const App: React.FC = () => {
  return (
    <div className="relative flex h-screen flex-col overflow-hidden border-r-[9px] border-l-8 border-black bg-[#e6e6e6] font-['Noto_Sans','Open_Sans',sans-serif]">
      <header className="shrink-0 bg-[#277f49]">
        <TitleBar />
        <TabBar />
      </header>
      <Ribbon />
      <FormulaBar />
      <main className="flex min-h-0 flex-1">
        <Grid />
        <VerticalScroll />
      </main>
      <SheetBar />
      <StatusBar />
      <Taskbar />

      <div className="absolute bottom-[104px] left-[748px] h-[125px] w-[487px] rounded-[26px] border-4 border-[#4df247] bg-[#e9ecea]" />

      <div className="pointer-events-none absolute right-[78px] bottom-[97px] text-[#8a8a8a]/60">
        <p className="text-[25px] leading-8">Activate Windows</p>
        <p className="text-[19px] leading-6">Go to Settings to activate Windows.</p>
      </div>

      <svg className="absolute top-[73px] left-[1531px]" width="16" height="24" viewBox="0 0 16 24" aria-hidden="true">
        <path d="M1 1v18l4.500-4 3.500 8 3.500-1.500-3.500-7.500h6z" fill="#fff" stroke="#222" />
      </svg>
    </div>
  );
};

export default App;
